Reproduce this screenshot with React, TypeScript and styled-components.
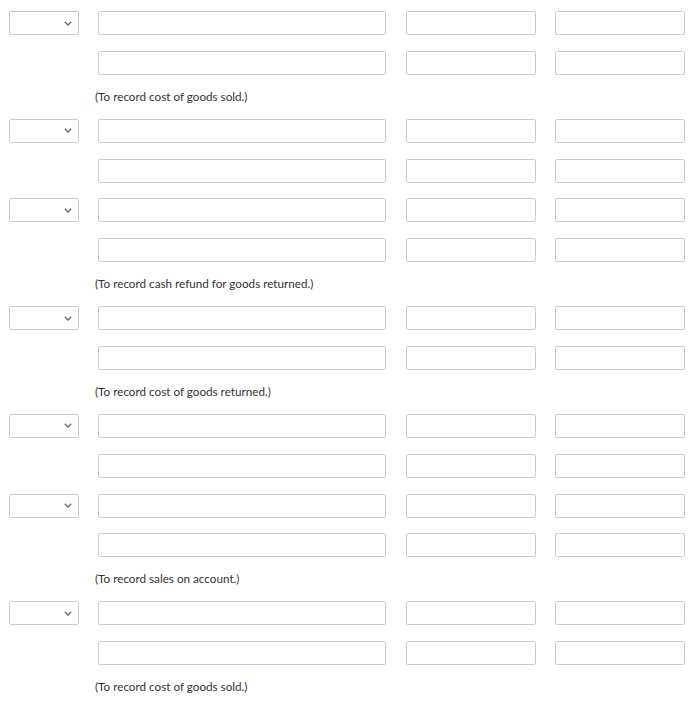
import * as React from 'react';
import styled, { createGlobalStyle } from 'styled-components';

type Entry = {
  lines: number;
  note?: string;
};

const entries: Entry[] = [
  { lines: 2, note: '(To record cost of goods sold.)' },
  { lines: 2 },
  { lines: 2, note: '(To record cash refund for goods returned.)' },
  { lines: 2, note: '(To record cost of goods returned.)' },
  { lines: 2 },
  { lines: 2, note: '(To record sales on account.)' },
  { lines: 2, note: '(To record cost of goods sold.)' },
];

const GlobalStyle = createGlobalStyle`
  html, body {
    margin: 0;
    padding: 0;
    background: #ffffff;
    font-family: Lato, "Open Sans", Arial, sans-serif;
  }
`;

const Chevron = () => (
  <svg width="8" height="5" viewBox="0 0 8 5">
    <polyline
      points="0.8,0.8 4,4 7.2,0.8"
      fill="none"
      stroke="#666666"
      strokeWidth="1.3"
    />
  </svg>
);

export default function App() {
  return (
    <>
      <GlobalStyle />
      <Page>
        {entries.map((entry, i) => (
          <EntryBlock key={i}>
            {Array.from({ length: entry.lines }).map((_, j) => (
              <Row key={j}>
                <DateCell>
                  {j === 0 && (
                    <DateSelect>
                      <Chevron />
                    </DateSelect>
                  )}
                </DateCell>
                <AccountCell>
                  <TextBox />
                </AccountCell>
                <AmountCell>
                  <TextBox />
                </AmountCell>
                <AmountCell>
                  <TextBox />
                </AmountCell>
              </Row>
            ))}
            {entry.note && <Note>{entry.note}</Note>}
          </EntryBlock>
        ))}
      </Page>
    </>
  );
}

const Page = styled.div`
  padding: 11px 0 0 9px;
  display: flex;
  flex-direction: column;
  gap: 15.9px;
`;

const EntryBlock = styled.div`
  display: flex;
  flex-direction: column;
  gap: 15.9px;
`;

const Row = styled.div`
  display: grid;
  grid-template-columns: 89px 308px 149px 130px;
  height: 24px;
`;

const DateCell = styled.div`
  width: 70px;
`;

const DateSelect = styled.div`
  box-sizing: border-box;
  width: 70px;
  height: 24px;
  border: 1px solid #cccccc;
  border-radius: 2px;
  background: #ffffff;
  display: flex;
  align-items: center;
  justify-content: flex-end;
  padding-right: 6px;
`;

const AccountCell = styled.div`
  width: 288px;
`;

const AmountCell = styled.div`
  width: 130px;
`;

const TextBox = styled.input.attrs({ type: 'text' })`
  box-sizing: border-box;
  display: block;
  width: 100%;
  height: 24px;
  margin: 0;
  border: 1px solid #cccccc;
  border-radius: 2px;
  background: #ffffff;
  outline: none;
`;

const Note = styled.div`
  margin-left: 86px;
  height: 12px;
  line-height: 11px;
  font-size: 11.7px;
  color: #333333;
`;
